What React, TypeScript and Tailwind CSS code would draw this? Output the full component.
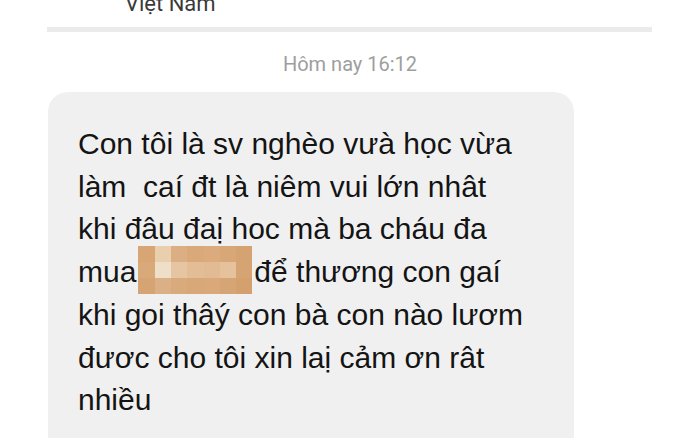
const lines = [
  'Con tôi là sv nghèo vưà học vừa',
  'làm  caí đt là niêm vui lớn nhât',
  'khi đâu đaị hoc mà ba cháu đa',
  null,
  'khi goi thâý con bà con nào lươm',
  'đươc cho tôi xin laị cảm ơn rât',
  'nhiều',
];

// pixelated blur block colours, 3 rows x 7 cols
const blur = [
  ['#d8a675', '#e9cfae', '#dcae84', '#d9a97a', '#dbab7d', '#d8a777', '#d5a271'],
  ['#d9a97a', '#f0dfc8', '#e6c6a2', '#e3bd96', '#e2bb94', '#e6c29c', '#d6a473'],
  ['#d6a373', '#dcb086', '#d9aa7c', '#d8a879', '#d9a97a', '#d6a575', '#d3a06e'],
];

// censor mosaic laid over the hidden word
function Censored() {
  return (
    <span className="relative inline-block w-[114px] mx-[2px]">
      <span className="absolute left-0 bottom-[-12px] w-full h-[48px] grid grid-cols-7 grid-rows-3">
        {blur.flat().map((c, i) => (
          <span key={i} style={{ backgroundColor: c }} />
        ))}
      </span>
    </span>
  );
}

export default function App() {
  return (
    <div className="w-[700px] h-[438px] overflow-hidden bg-white font-['Liberation_Sans',Arial,sans-serif]">
      {/* Header (cut off at top) */}
      <div className="h-[27px] pl-[125px] overflow-hidden">
        <div className="-mt-[9px] text-[22px] leading-[26px] text-[#3a3a3a] font-['Roboto',sans-serif]">
          Việt Nam
        </div>
      </div>
      <div className="ml-[47px] w-[605px] h-[5px] bg-[#ebebeb]" />

      {/* Timestamp */}
      <div className="pt-[20px] text-center text-[20px] leading-[24px] text-[#9e9e9e] font-['Roboto',sans-serif]">
        Hôm nay 16:12
      </div>

      {/* Message bubble */}
      <div className="ml-[48px] mt-[16px] w-[526px] h-[400px] rounded-[20px] bg-[#f0f0f0] pl-[30px] pt-[31px]">
        <div className="text-[30px] leading-[42.7px] text-[#141414] whitespace-pre">
          {lines.map((l, i) =>
            l === null ? (
              <div key={i}>
                mua
                <Censored />
                để thương con gaí
              </div>
            ) : (
              <div key={i}>{l}</div>
            )
          )}
        </div>
      </div>
    </div>
  );
}
